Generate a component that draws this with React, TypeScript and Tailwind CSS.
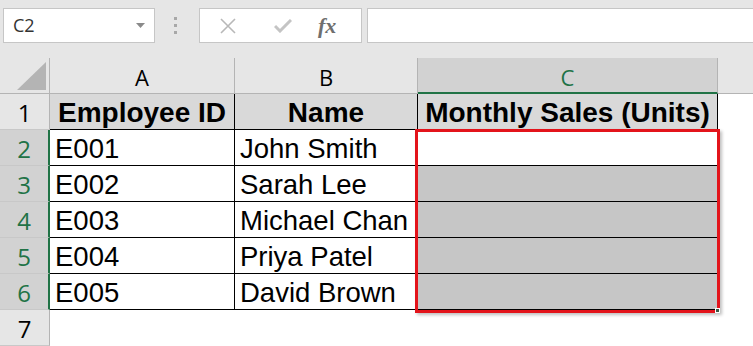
import React from 'react';

const data = [
  ['E001', 'John Smith'],
  ['E002', 'Sarah Lee'],
  ['E003', 'Michael Chan'],
  ['E004', 'Priya Patel'],
  ['E005', 'David Brown'],
];

const cellFont = { fontFamily: '"Liberation Sans", Arial, sans-serif' };
const uiFont = { fontFamily: '"Open Sans", "Noto Sans", sans-serif' };

function FormulaBar() {
  return (
    <div className="flex h-[58px] items-start bg-[#e6e6e6] pt-2">
      {/* Name box */}
      <div className="ml-[3px] flex h-[35px] w-[152px] items-center justify-between border border-[#c6c6c6] bg-white pl-[9px] pr-[9px]">
        <span className="text-[18px] text-[#333]" style={uiFont}>C2</span>
        <svg width="9" height="5" viewBox="0 0 9 5">
          <path d="M0 0h9L4.5 5z" fill="#8a8a8a" />
        </svg>
      </div>

      {/* Separator dots */}
      <div className="ml-[19px] mt-[9px] flex w-[4px] flex-col gap-[4px]">
        <span className="h-[3px] w-[3px] bg-[#a8a8a8]" />
        <span className="h-[3px] w-[3px] bg-[#a8a8a8]" />
        <span className="h-[3px] w-[3px] bg-[#a8a8a8]" />
      </div>

      {/* Cancel / enter / fx */}
      <div className="ml-[21px] flex h-[35px] w-[163px] items-center border border-[#c6c6c6] bg-white">
        <svg className="ml-[20px]" width="16" height="16" viewBox="0 0 16 16">
          <path d="M1 1l14 14M15 1L1 15" stroke="#b8b8b8" strokeWidth="1.6" fill="none" />
        </svg>
        <svg className="ml-[38px]" width="18" height="14" viewBox="0 0 18 14">
          <path d="M1 7l5 5L17 1" stroke="#c4c4c4" strokeWidth="3" fill="none" />
        </svg>
        <span
          className="ml-[26px] text-[22px] font-bold italic text-[#6f6f6f]"
          style={{ fontFamily: '"Liberation Serif", "Times New Roman", serif' }}
        >
          fx
        </span>
      </div>

      {/* Formula input */}
      <div className="ml-[5px] h-[35px] flex-1 border border-r-0 border-[#c6c6c6] bg-white" />
    </div>
  );
}

function ColumnHeaders() {
  return (
    <>
      <div className="relative border-r border-b border-[#b4b4b4] bg-[#e6e6e6]">
        <svg className="absolute bottom-[3px] right-[3px]" width="29" height="28" viewBox="0 0 29 28">
          <path d="M0 28L29 0v28z" fill="#b4b4b4" />
        </svg>
      </div>
      <div className="flex items-center justify-center border-r border-b border-[#b4b4b4] bg-[#e6e6e6] pt-1 text-[22px] text-black" style={uiFont}>A</div>
      <div className="flex items-center justify-center border-r border-b border-[#b4b4b4] bg-[#e6e6e6] pt-1 text-[22px] text-black" style={uiFont}>B</div>
      <div className="flex items-center justify-center border-r border-b-2 border-r-[#b4b4b4] border-b-[#217346] bg-[#d2d2d2] pt-1 text-[22px] text-[#217346]" style={uiFont}>C</div>
      <div className="border-b border-[#b4b4b4] bg-[#e6e6e6]" />
    </>
  );
}

function RowHeader({ n, selected }: { n: number; selected?: boolean }) {
  return (
    <div
      className={`flex items-center justify-center border-b border-b-[#c8c8c8] pt-[3px] text-[24px] ${
        selected
          ? 'border-r-2 border-r-[#217346] bg-[#d2d2d2] text-[#217346]'
          : 'border-r border-r-[#b4b4b4] bg-[#e6e6e6] text-black'
      }`}
      style={uiFont}
    >
      {n}
    </div>
  );
}

export default function App() {
  return (
    <div className="h-[346px] w-[753px] overflow-hidden bg-white">
      <FormulaBar />

      <div className="relative grid grid-cols-[50px_185px_183px_300px_1fr] auto-rows-[36px]">
        <ColumnHeaders />

        {/* Row 1: table headings */}
        <RowHeader n={1} />
        {['Employee ID', 'Name', 'Monthly Sales (Units)'].map((h) => (
          <div
            key={h}
            className="flex items-center justify-center whitespace-nowrap border-r border-b border-black bg-[#d9d9d9] pt-[3px] text-[28px] font-bold text-black"
            style={cellFont}
          >
            {h}
          </div>
        ))}
        <div className="bg-white" />

        {data.map(([id, name], i) => (
          <React.Fragment key={id}>
            <RowHeader n={i + 2} selected />
            <div className="flex items-center border-r border-b border-black pl-[5px] pt-[3px] text-[27.5px] text-black" style={cellFont}>
              {id}
            </div>
            <div className="flex items-center whitespace-nowrap border-r border-b border-black pl-[5px] pt-[3px] text-[27.5px] text-black" style={cellFont}>
              {name}
            </div>
            <div className={`border-r border-b border-black ${i === 0 ? 'bg-white' : 'bg-[#c6c6c6]'}`} />
            <div className="bg-white" />
          </React.Fragment>
        ))}

        <RowHeader n={7} />
        <div className="col-span-4 bg-white" />

        {/* Highlight around C2:C6 */}
        <div className="pointer-events-none absolute left-[415px] top-[71px] h-[184px] w-[305px] border-[3px] border-[#e3141b] shadow-[2px_2px_3px_rgba(0,0,0,0.25)]">
          <span className="absolute -bottom-[3px] -right-[3px] h-[5px] w-[5px] border border-white bg-[#3a5a45]" />
        </div>
      </div>
    </div>
  );
}
